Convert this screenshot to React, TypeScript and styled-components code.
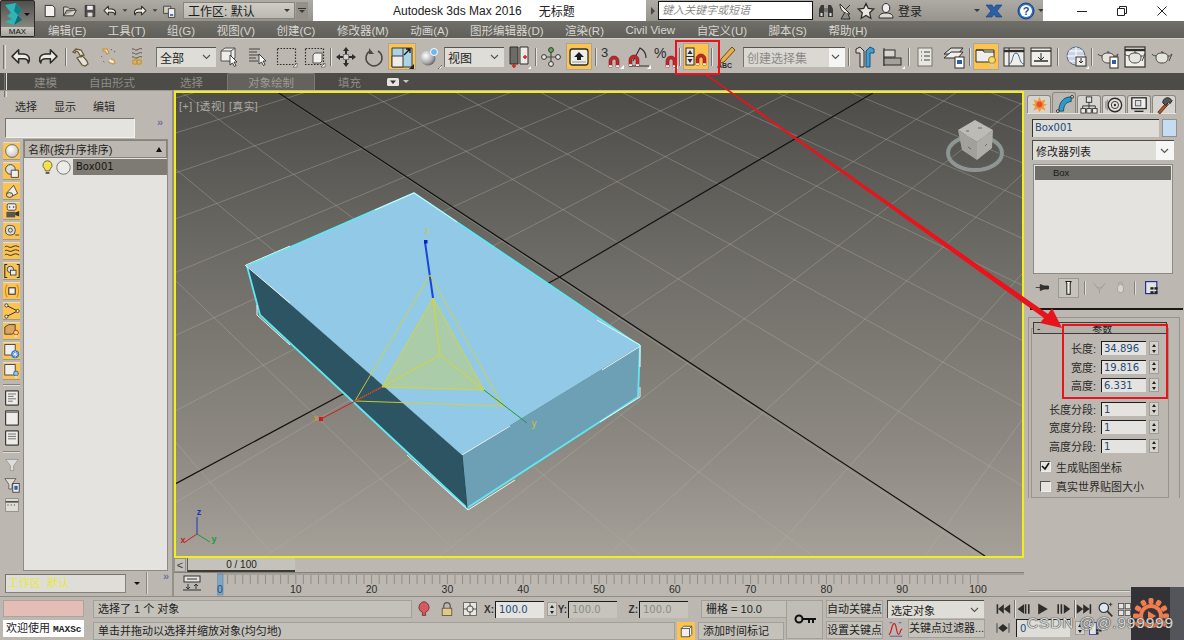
import React from "react";
import styled, { createGlobalStyle } from "styled-components";

const Global = createGlobalStyle`
  html, body { margin: 0; padding: 0; background: #bcb8b1; }
  #root { width: 1184px; height: 640px; overflow: hidden; }
  * { box-sizing: border-box; }
`;

const FONT = `"Liberation Sans", "Noto Sans CJK SC", sans-serif`;
const PANEL = "#bcb8b1";

const Root = styled.div`
  position: relative; width: 1184px; height: 640px; overflow: hidden;
  display: flex; flex-direction: column; background: ${PANEL};
  font-family: ${FONT}; font-size: 11px; color: #2b2a28;
`;

/* ---------- icons ---------- */
const Svg: React.FC<{ s?: number; vb?: number; children: React.ReactNode }> = ({ s = 20, vb, children }) => {
  const box = vb ?? (s >= 22 ? s : 20);
  return <svg width={s} height={s} viewBox={`0 0 ${box} ${box}`} style={{ display: "block", flex: "none" }} fill="none">{children}</svg>;
};
const K = "#2e2d2b";
const Magnet = ({ x = 0, y = 0 }: { x?: number; y?: number }) => (
  <g transform={`translate(${x} ${y})`}>
    <path d="M0 11V5a5 5 0 0 1 10 0v6H7V5a2 2 0 0 0-4 0v6z" fill="#c8242a" stroke="#5c1214" strokeWidth=".5" />
    <path d="M0 11h3v-1.800H0zM7 11h3V9.200H7z" fill="#f0f0ee" />
  </g>
);
const NewIco = () => <Svg><path d="M4 3h9l3 3v11H4z" fill="#f3f2ee" stroke={K} strokeWidth="1.200" /></Svg>;
const OpenIco = () => <Svg><path d="M2 16V5h5l2 2h7v2H6l-4 7h12l4-7h-2" fill="#d9d6cf" stroke={K} strokeWidth="1.100" /></Svg>;
const SaveIco = () => <Svg><path d="M4 3h12v14H4z" fill="#4b4b4b" stroke={K} /><path d="M6.500 3.500h7v5h-7z" fill="#eee" /><path d="M7 12h6v5H7z" fill="#dedcd6" /></Svg>;
const ArrowL = ({ s = 20 }: { s?: number }) => <Svg s={s} vb={20}><path d="M8 4 2.500 9.500 8 15v-3.500h4c2.500 0 4 1 4 3.500 1.500-2 2-7-4-7.500H8z" fill="#ecebe6" stroke={K} strokeWidth="1.300" strokeLinejoin="round" /></Svg>;
const ArrowR = ({ s = 20 }: { s?: number }) => <Svg s={s} vb={20}><path d="M12 4l5.500 5.500L12 15v-3.500H8c-2.500 0-4 1-4 3.500-1.500-2-2-7 4-7.500h4z" fill="#ecebe6" stroke={K} strokeWidth="1.300" strokeLinejoin="round" /></Svg>;
const ProjIco = () => <Svg><path d="M2 4h9v9H2z" fill="#cfccc5" stroke={K} /><path d="M8 7h8v11H8z" fill="#f1f0ec" stroke={K} /><path d="M10 14h4v2h-4z" fill="#2a5ea8" /></Svg>;
const Caret = styled.i<{ $c?: string }>`
  display: block; flex: none; width: 0; height: 0;
  border-left: 3px solid transparent; border-right: 3px solid transparent;
  border-top: 3px solid ${p => p.$c || "#3a3a38"};
`;
const Binoc = () => <Svg><path d="M3 16V8l2-4h3v12zM12 16V4h3l2 4v8z" fill="#3a3a38" /><path d="M8 7h4v4H8z" fill="#777" /><path d="M4.500 12h2v3h-2zM13.500 12h2v3h-2z" fill="#ddd" /></Svg>;
const Dish = () => <Svg><path d="M4 3c0 6 4 10 10 10z" fill="#e6e5e0" stroke={K} /><path d="M9 11l-4 7h9l-2-5" fill="#8d8b86" stroke={K} /><path d="M10 8l4-4" stroke={K} /></Svg>;
const Star = () => <Svg><path d="M10 2.500l2.300 5 5.400.6-4 3.700 1.100 5.400L10 14.500l-4.800 2.700 1.100-5.400-4-3.700 5.400-.6z" fill="#e8e7e2" stroke={K} strokeWidth="1.300" /></Svg>;
const User = () => <Svg><ellipse cx="10" cy="7" rx="3.800" ry="4.500" fill="#eee" stroke={K} /><path d="M3 17c0-4 3-5 7-5s7 1 7 5z" fill="#dcdad4" stroke={K} /></Svg>;
const XLogo = () => <Svg><path d="M2 4h6l2 3 2-3h6l-5 6 5 6h-6l-2-3-2 3H2l5-6z" fill="#2a5fa8" stroke="#173a70" strokeWidth=".6" /></Svg>;
const Help = () => <Svg><circle cx="10" cy="10" r="8" fill="#2f6fc4" stroke="#1c3f7a" /><circle cx="10" cy="10" r="6" fill="#fff" /><text x="10" y="14" textAnchor="middle" fontSize="11" fontWeight="700" fill="#1f4f9a" fontFamily="Liberation Sans">?</text></Svg>;
const Link = () => <Svg s={22}><path d="M3 6l3-3 5 1 3 5-3 2-3-5-2-1-1 2zM9 11l3-2 5 6 1 3-3 2-3-1-5-7z" fill="#e4e2dc" stroke="#6b5a35" strokeWidth="1.300" /></Svg>;
const Unlink = () => <Svg s={22}><path d="M5 3h4l2 4-2 1-2-3H5zM13 13l3 1 1 3-2 1-3-1-2-2" fill="#eee" stroke="#c89a46" strokeWidth="1.400" /><path d="M3 10l2 2m0 3 2 2" stroke="#555" strokeDasharray="1 1.500" /><path d="M13 3l1 2m3 0-1 2" stroke="#555" strokeDasharray="1 1" /></Svg>;
const Bind = () => <Svg s={22}><path d="M3 3c2-1 3 2 5 1s3-2 5-1M3 7c2-1 3 2 5 1s3-2 5-1M3 11c2-1 3 2 5 1s3-2 5-1" stroke="#55534e" transform="translate(3 0)" /><circle cx="9" cy="16" r="2.300" stroke="#d39a22" strokeWidth="1.500" /><circle cx="13" cy="16" r="2.300" stroke="#d39a22" strokeWidth="1.500" /></Svg>;
const Cursor = ({ x = 10, y = 9 }: { x?: number; y?: number }) => <path transform={`translate(${x} ${y})`} d="M0 0v10l2.500-2 2 3.500 1.500-1-2-3.500h3z" fill="#fff" stroke={K} strokeWidth=".9" />;
const SelObj = () => <Svg s={22}><path d="M2 5l4-3h10v10l-4 3H2z" fill="#eeedea" stroke="#55534e" /><path d="M2 5h10v10M12 5l4-3" stroke="#55534e" /><Cursor x={11} y={9} /></Svg>;
const SelName = () => <Svg s={22}><path d="M2 3h11M2 6h8M2 9h11M2 12h7M2 15h9" stroke="#45443f" strokeWidth="1.200" /><Cursor x={12} y={8} /></Svg>;
const RectSel = () => <Svg s={22}><path d="M1.500 2.500h18v16h-18z" stroke={K} strokeWidth="1.200" strokeDasharray="1.600 1.400" /><path d="M17 21h4v-4z" fill="#fff" stroke={K} strokeWidth=".5" /></Svg>;
const WinSel = () => <Svg s={22}><path d="M1.500 2.500h18v16h-18z" stroke={K} strokeWidth="1.200" strokeDasharray="1.600 1.400" /><path d="M9 9l2-2h7v8l-2 2H9z" fill="#f1f0ec" stroke="#55534e" /><path d="M17 21h4v-4z" fill="#fff" stroke={K} strokeWidth=".5" /></Svg>;
const Move = () => <Svg s={22}><path d="M11 1l3 4h-2v3h-2V5H8zM11 21l-3-4h2v-3h2v3h2zM1 11l4-3v2h3v2H5v2zM21 11l-4 3v-2h-3v-2h3V8z" fill={K} /><rect x="8.500" y="8.500" width="5" height="5" stroke="#777" fill="#d7d5cf" /></Svg>;
const Rotate = () => <Svg s={22}><path d="M7 5a8 8 0 1 0 8 0" stroke="#4a4944" strokeWidth="1.500" /><path d="M6 2v6h5z" fill="#4a4944" /></Svg>;
const Scale = () => <Svg s={24}><path d="M2 3h20v19H2z" fill="#a9d4e4" stroke="#3d3c38" /><path d="M2 11h11v11H2z" fill="#eeece7" stroke="#3d3c38" /><path d="M13 3v8" stroke="#3d3c38" /><path d="M14 10l6-6m-4 0h4v4" stroke="#111" strokeWidth="1.300" /><path d="M19 24h5v-5z" fill="#222" /></Svg>;
const Sphere = () => <Svg s={24}><defs><radialGradient id="sp" cx=".35" cy=".35" r=".8"><stop offset="0" stopColor="#fff" /><stop offset=".6" stopColor="#aaa" /><stop offset="1" stopColor="#444" /></radialGradient></defs><circle cx="10" cy="13" r="7.500" fill="url(#sp)" /><circle cx="16" cy="7" r="3.500" fill="#69b8ee" stroke="#fff" /><path d="M20 24h4v-4z" fill="#fff" stroke={K} strokeWidth=".5" /></Svg>;
const Mirror2 = () => <Svg s={24}><path d="M3 2h8v17H3z" fill="#6c6b66" stroke={K} /><path d="M13 2h8v17h-8z" fill="#eceae5" stroke={K} /><path d="M7 19v4M5 21h4M18 10v4M16 12h4" stroke="#e01820" strokeWidth="1.400" /><path d="M21 24h3v-3z" fill="#fff" /></Svg>;
const Pivot = () => <Svg s={22}><path d="M11 5v13M4 11h14" stroke="#4a4944" strokeWidth="1.200" /><circle cx="11" cy="4" r="2.400" fill="#5cb04c" stroke="#333" /><circle cx="4" cy="11" r="2.400" fill="#e9e7e2" stroke="#333" /><circle cx="18" cy="11" r="2.400" fill="#e9e7e2" stroke="#333" /><circle cx="11" cy="18" r="2.400" fill="#e9e7e2" stroke="#333" /></Svg>;
const Manip = () => <Svg s={22}><rect x="2" y="3" width="18" height="16" rx="2.500" fill="#efeee9" stroke={K} strokeWidth="1.300" /><path d="M11 6l5 5h-3v3H9v-3H6z" fill="#1c1c1c" /><path d="M4 16h14" stroke="#999" /></Svg>;
const Snap3 = () => <Svg s={24}><text x="1" y="12" fontSize="13" fill={K} fontFamily="Liberation Sans">3</text><Magnet x={9} y={11} /><path d="M20 24h4v-4z" fill="#fff" /></Svg>;
const SnapA = () => <Svg s={24}><path d="M6 16L13 3c4 2 6 6 6 10M2 21h20" stroke={K} strokeWidth="1.100" /><Magnet x={2} y={10} /><path d="M20 24h4v-4z" fill="#fff" /></Svg>;
const SnapP = () => <Svg s={24}><text x="0" y="13" fontSize="14" fill={K} fontFamily="Liberation Sans">%</text><Magnet x={12} y={11} /><path d="M20 24h4v-4z" fill="#fff" /></Svg>;
const SnapS = () => <Svg s={24}><rect x="2" y="3" width="8" height="17" fill="#e9e7e2" stroke={K} /><path d="M6 5l-2.500 4h5zM6 18l2.500-4h-5z" fill={K} /><path d="M2 11.500h8" stroke={K} /><Magnet x={12} y={9} /></Svg>;
const Pencil = () => <Svg s={24}><path d="M6 14L17 2l3 3L9 17l-4 1z" fill="#e9b04a" stroke="#6b4a18" /><text x="2" y="23" fontSize="7" fontWeight="700" fill={K} fontFamily="Liberation Sans">ABC</text></Svg>;
const MirrorBig = () => <Svg s={24}><path d="M3 4l4-2 4 4v16H7V8H3z" fill="#dad8d2" stroke={K} /><path d="M21 4l-4-2-4 4v16h4V8h4z" fill="#3f9fd2" stroke="#1c5070" /></Svg>;
const Align = () => <Svg s={24}><path d="M3 3v18" stroke={K} /><rect x="3" y="5" width="11" height="7" fill="#d7d5cf" stroke={K} /><rect x="3" y="13" width="17" height="7" fill="#a3a19b" stroke={K} /><path d="M21 24h3v-3z" fill="#fff" /></Svg>;
const ListI = () => <Svg s={22}><rect x="4" y="2" width="14" height="18" fill="#e8e6e1" stroke="#77756f" /><path d="M7 6h1M10 6h6M7 10h1M10 10h6M7 14h1M10 14h6" stroke="#45443f" /></Svg>;
const LayerI = () => <Svg s={24}><path d="M2 9l7-6h12l-5 6z" fill="#e3e1dc" stroke={K} /><path d="M2 13l7-6h12l-5 6z" fill="#f2f0ec" stroke={K} /><rect x="13" y="12" width="9" height="11" fill="#fff" stroke={K} /><path d="M15 15h5v4h-5z" fill="#2a5ea8" /></Svg>;
const Folder = () => <Svg s={24}><path d="M2 5h18v12H2z" fill="#efeee9" stroke={K} /><path d="M2 5h7l1 2h10" stroke={K} /><circle cx="18" cy="15" r="3.500" fill="#f6d86c" stroke="#9a7c22" /><rect x="16.500" y="18.500" width="3" height="3" fill="#ccc" /></Svg>;
const Graph = () => <Svg s={24}><rect x="2" y="3" width="20" height="18" fill="#efeee9" stroke={K} /><path d="M2 6h20" stroke={K} strokeWidth="2.400" /><path d="M7 3v18" stroke={K} /><path d="M7 19c4 0 3-11 7-11s3 11 8 11" stroke="#35639a" /></Svg>;
const Sched = () => <Svg s={24}><rect x="2" y="3" width="20" height="18" fill="#efeee9" stroke={K} /><path d="M2 6h20M5 16h14" stroke={K} strokeWidth="1.500" /><path d="M12 8v6m-3-2l3 3 3-3" stroke={K} /></Svg>;
const Globe = () => <Svg s={24}><circle cx="11" cy="11" r="9" fill="#c9d4e2" stroke="#5a6a80" /><path d="M2 11h18M11 2v18M4 6h14M4 16h14" stroke="#fff" /><rect x="11" y="12" width="10" height="9" fill="#efeee9" stroke={K} /><path d="M16 13v5m-2-2l2 2 2-2" stroke={K} /><path d="M21 24h3v-3z" fill="#fff" /></Svg>;
const Teapot = ({ box = 0 }: { box?: number }) => <Svg s={24}>{box === 2 && <rect x="2" y="2" width="20" height="20" fill="#efeee9" stroke={K} strokeWidth="1.200" />}{box === 2 && <path d="M2 5h20" stroke={K} strokeWidth="2.400" />}<path d="M6 12c0-3 3-4 6-4s6 1 6 4c0 4-2 6-6 6s-6-2-6-6z" fill="#e6e4df" stroke="#45443f" /><path d="M6 11c-2-1-3 0-4-2M18 11c2 1 3-2 4-2l-3 7" stroke="#45443f" /><path d="M11 7h2v1" stroke="#45443f" />{box === 1 && <><rect x="14" y="12" width="8" height="11" fill="#fff" stroke={K} /><rect x="16" y="15" width="4" height="4" fill="#2a5ea8" /></>}</Svg>;

/* left panel creation icons */
const T = ({ children }: { children: React.ReactNode }) => <Svg s={16}>{children}</Svg>;
const Ball = () => <><defs><radialGradient id="bl" cx=".4" cy=".35" r=".7"><stop offset="0" stopColor="#fff" /><stop offset="1" stopColor="#c3c3c0" /></radialGradient></defs><circle cx="10" cy="10" r="8" fill="url(#bl)" stroke="#55534e" /></>;
const leftIcons = [
  <T key="a"><Ball /></T>,
  <T key="b"><circle cx="8" cy="8" r="6" fill="#ddd" stroke={K} /><path d="M9 9h9v9H9z" fill="#eee" stroke={K} /></T>,
  <T key="c"><path d="M3 13L12 3l5 10-6 3z" fill="#eee" stroke={K} /><ellipse cx="7" cy="15" rx="4" ry="3" fill="#e8d89a" stroke={K} /></T>,
  <T key="d"><rect x="4" y="1" width="11" height="8" rx="2" fill="#eee" stroke={K} /><rect x="3" y="11" width="11" height="7" fill="#555" /><path d="M14 12l5-2v7l-5-2z" fill="#333" /><circle cx="7" cy="5" r="1" fill={K} /><circle cx="12" cy="5" r="1" fill={K} /></T>,
  <T key="e"><rect x="2" y="3" width="12" height="12" rx="5" fill="#dedcd6" stroke={K} /><circle cx="8" cy="9" r="2.500" stroke={K} /><path d="M14 15h5" stroke={K} /></T>,
  <T key="f"><path d="M1 5c3-3 5 2 9 0s5-2 9 0M1 10c3-3 5 2 9 0s5-2 9 0M1 15c3-3 5 2 9 0s5-2 9 0" stroke={K} strokeWidth="1.200" /></T>,
  <T key="g"><path d="M4 2H1v16h3M16 2h3v16h-3" stroke={K} strokeWidth="1.300" /><circle cx="8" cy="8" r="4" fill="#ddd" stroke={K} /><rect x="8" y="9" width="7" height="6" fill="#eee" stroke={K} /></T>,
  <T key="h"><path d="M4 2C1 6 1 14 4 18M16 2c3 4 3 12 0 16" stroke="#e08a1e" strokeWidth="1.500" /><rect x="6" y="6" width="8" height="8" fill="#f2f1ed" stroke={K} strokeWidth="1.300" /></T>,
  <T key="i"><path d="M3 3l14 7L3 17" stroke={K} strokeWidth="1.200" /><circle cx="3" cy="3" r="2" fill="#eee" stroke={K} /><circle cx="17" cy="10" r="2" fill="#eee" stroke={K} /><circle cx="3" cy="17" r="2" fill="#eee" stroke={K} /></T>,
  <T key="j"><path d="M1 5l5-3h8v9l-4 3H1z" fill="#d9a662" stroke={K} /><circle cx="15" cy="12" r="3" fill="#f6d56a" stroke="#a23" /><rect x="13.500" y="15" width="3" height="3" fill="#ddd" /></T>,
  <T key="k"><rect x="1" y="2" width="13" height="13" fill="#eee" stroke={K} /><circle cx="14" cy="14" r="5" fill="#2f78d8" /><path d="M14 10v8M10.500 14h7M11.500 11.500l5 5M16.500 11.500l-5 5" stroke="#fff" /></T>,
  <T key="l"><rect x="1" y="2" width="13" height="13" fill="#eee" stroke={K} /><circle cx="15" cy="13" r="3" fill="#8ec3e8" stroke="#357" /><rect x="13.500" y="16" width="3" height="3" fill="#ddd" /></T>,
];
const Doc = ({ lines = 3 }: { lines?: number }) => <T><rect x="2" y="1" width="16" height="18" rx="1" fill="#eeede9" stroke="#3d3c38" strokeWidth="1.500" /><path d={lines === 1 ? "M3 3h14" : lines === 2 ? "M5 5h10M5 8h10M5 11h10" : "M5 5h10M5 8h7M5 11h10M5 14h6"} stroke="#555" /></T>;
const Funnel = () => <T><path d="M2 3h16l-6 8v6h-4v-6z" fill="#ddd" stroke="#96938c" /></T>;
const FunnelDoc = () => <T><path d="M1 2h14l-5 7v6H6V9z" fill="#dedcd6" stroke="#55534e" /><rect x="11" y="8" width="8" height="11" fill="#eee" stroke={K} /><path d="M13 11h4v5h-4z" fill="#2a5ea8" /></T>;
const Strip = () => <T><rect x="2" y="2" width="16" height="16" fill="#dedcd6" stroke="#8a8780" /><path d="M2 6h16" stroke="#4d4c47" strokeWidth="2" /><path d="M5 9v2M9 9v2M13 9v2" stroke="#555" /></T>;

/* ---------- title bar ---------- */
const LogoBtn = styled.div`
  position: absolute; left: 0; top: 0; width: 35px; height: 37px; z-index: 3;
  background: linear-gradient(#4f4e4a, #9b9992); border: 1px solid #2b2a28; border-radius: 2px;
  display: flex; flex-direction: column; align-items: center;
`;
const LogoArt = styled.div`flex: 1; width: 100%; display: flex; align-items: center; justify-content: center; padding-right: 3px;`;
const LogoLabel = styled.div`
  width: 100%; height: 9px; background: linear-gradient(#c9c6bf, #a8a59e); text-align: center;
  font-size: 8px; line-height: 9px; color: #111;
`;
const TitleBar = styled.div`height: 21px; display: flex; background: #fff; flex: none;`;
const QuickBar = styled.div`
  width: 313px; padding-left: 40px; display: flex; align-items: center;
  background: linear-gradient(#aeaba4, #96938c);
`;
const QuickBtn = styled.div<{ $w?: number }>`width: ${p => p.$w ?? 20}px; display: flex; align-items: center; justify-content: center; transform: scale(.8);`;
const WorkCombo = styled.div`
  margin-left: 3px; width: 112px; height: 17px; padding: 0 4px; display: flex; align-items: center; justify-content: space-between;
  background: linear-gradient(#cfccc5, #bcb9b2); border: 1px solid #88857e; font-size: 12px; color: #1d1d1d;
`;
const MenuKnob = styled.div`margin-left: 1px; width: 12px; height: 17px; background: #94918a; display: flex; flex-direction: column; align-items: center; justify-content: center; gap: 1px; &::before { content: ""; width: 8px; height: 1px; background: #333; }`;
const TitleText = styled.div`
  width: 333px; padding-left: 80px; display: flex; align-items: center; gap: 17px; font-size: 12px; color: #222; white-space: nowrap;
`;
const SearchBar = styled.div`
  width: 397px; padding-left: 5px; display: flex; align-items: center;
  background: linear-gradient(#aeaba4, #97948d);
`;
const Tri = styled.i`width: 0; height: 0; border-top: 4px solid transparent; border-bottom: 4px solid transparent; border-left: 4px solid #4a4944; flex: none;`;
const SearchInput = styled.div`
  margin-left: 3px; width: 155px; height: 19px; padding-left: 3px; background: #fff; border: 1px solid #111; flex: none;
  font-size: 11px; line-height: 17px; font-style: italic; color: #8a8a88;
`;
const SearchIcons = styled.div`
  margin-left: 3px; flex: 1; display: flex; align-items: center; white-space: nowrap;
`;
const SearchIcon = styled.div<{ $ml?: number }>`margin-left: ${p => p.$ml ?? 0}px; flex: none; display: flex; align-items: center; font-size: 12px; color: #222;`;
const WinCtrls = styled.div`flex: 1; display: flex; align-items: center; background: #fff; padding-left: 19px;`;
const WinBtn = styled.div`width: 40px; display: flex; align-items: center; justify-content: center;`;

/* ---------- menu ---------- */
const MenuBar = styled.div`
  height: 17px; flex: none; padding-left: 48px; display: flex; align-items: center; gap: 21.500px;
  background: linear-gradient(#716f6a, #5f5e59); color: #d8d6d0; font-size: 11.500px; white-space: nowrap;
`;
/* ---------- toolbar ---------- */
const ToolBar = styled.div`
  height: 35px; flex: none; padding: 1px 0 0 3px; display: flex; align-items: center;
  background: ${PANEL}; border-top: 1px solid #d2cfc8;
`;
const Grip = styled.div`width: 3px; height: 24px; flex: none; border-left: 1px solid #77746d; border-right: 1px solid #e2e0da;`;
const Slot = styled.div<{ $w: number; $ml: number; $hl?: boolean }>`
  flex: none; width: ${p => p.$w}px; height: 27px; margin-left: ${p => p.$ml}px;
  display: flex; align-items: center; justify-content: center;
  background: ${p => (p.$hl ? "#fcc44e" : "transparent")};
  ${p => p.$hl && "box-shadow: inset 0 0 0 1px #a9a59d;"}
`;
const ToolSep = styled.div<{ $ml: number }>`
  flex: none; width: 2px; height: 18px; margin-left: ${p => p.$ml}px;
  border-left: 1px solid #77746d; border-right: 1px solid #e6e4de;
`;
const ToolCombo = styled.div<{ $w: number; $ml: number; $grey?: boolean }>`
  flex: none; width: ${p => p.$w}px; height: 20px; margin-left: ${p => p.$ml}px; padding: 0 5px 0 3px;
  display: flex; align-items: center; justify-content: space-between;
  background: ${p => (p.$grey ? "linear-gradient(90deg,#d9d8d3 84%,#f5f5f3 84%)" : "#dfddd8")};
  border-top: 1px solid #55534e; border-left: 1px solid #77746d;
  font-size: 12px; color: ${p => (p.$grey ? "#8b8a86" : "#1d1d1d")};
`;
const Chev = () => <svg width="9" height="6" viewBox="0 0 9 6" style={{ flex: "none" }}><path d="M1 1l3.500 3.500L8 1" stroke="#55534e" fill="none" strokeWidth="1.100" /></svg>;

/* ---------- ribbon ---------- */
const Ribbon = styled.div`
  height: 17px; flex: none; padding-left: 4px; display: flex; align-items: stretch;
  background: #4c4b47; color: #8e8c86; font-size: 11.500px; white-space: nowrap;
`;
const RibbonTab = styled.div<{ $ml: number; $active?: boolean }>`
  margin-left: ${p => p.$ml}px; display: flex; align-items: center;
  ${p => p.$active && `background: #63625d; border: 1px solid #7b7973; border-bottom: 0; border-radius: 2px 2px 0 0; padding: 0 20px; color: #9c9a94;`}
`;

/* ---------- main ---------- */
const Main = styled.div`flex: 1; min-height: 0; display: flex;`;
const LeftPanel = styled.div`
  width: 174px; flex: none; display: flex; flex-direction: column; padding-right: 4px;
  border-right: 2px solid #94918a; border-top: 1px solid #9d9a93;
`;
const PanelTabs = styled.div`height: 27px; flex: none; padding: 3px 0 0 15px; display: flex; gap: 17px; font-size: 11px; align-items: center; color: #2b2a28;`;
const FindRow = styled.div`height: 21px; flex: none; padding-left: 5px; display: flex; align-items: flex-start;`;
const FindBox = styled.div`width: 130px; height: 20px; background: #e4e3df; border-top: 1px solid #77746d; border-left: 1px solid #77746d; border-right: 1px solid #f2f1ed; border-bottom: 1px solid #f2f1ed;`;
const Chevrons = styled.div<{ $ml: number }>`margin-left: ${p => p.$ml}px; color: #6f72a8; font-size: 11px; line-height: 9px; font-weight: 700; letter-spacing: -1px;`;
const PanelBody = styled.div`flex: 1; min-height: 0; display: flex; padding-left: 3px; gap: 3px;`;
const ToolCol = styled.div`width: 17px; flex: none; padding-top: 3px; display: flex; flex-direction: column; align-items: center;`;
const ToolTile = styled.div<{ $y?: boolean }>`
  width: 17px; height: 18px; margin-bottom: 2px; flex: none; display: flex; align-items: center; justify-content: center;
  background: ${p => (p.$y ? "#fcc44e" : "transparent")};
  ${p => p.$y && "box-shadow: inset 0 -1px 0 #999, inset 0 1px 0 #ddd;"}
`;
const ToolDiv = styled.div`width: 17px; height: 2px; margin: 2px 0 3px; border-top: 1px solid #87847d; border-bottom: 1px solid #dedcd6; flex: none;`;
const ObjectList = styled.div`flex: 1; min-width: 0; background: #e4e3df; border: 1px solid #8d8a83; display: flex; flex-direction: column;`;
const ListHead = styled.div`
  height: 18px; flex: none; padding: 0 4px 0 3px; display: flex; align-items: center; justify-content: space-between;
  background: #bcb8b1; border: 1px solid #85827b; font-size: 11px; color: #1d1d1d;
`;
const SortTri = styled.i`width: 0; height: 0; border-left: 3.500px solid transparent; border-right: 3.500px solid transparent; border-bottom: 5px solid #111;`;
const ListRow = styled.div`height: 16px; flex: none; padding-left: 16px; display: flex; align-items: center; gap: 1px; margin-top: 1px;`;
const ListName = styled.div`flex: 1; height: 16px; margin-left: 1px; padding-left: 3px; background: #7e7b75; line-height: 16px; color: #16160f; font-family: "DejaVu Sans", sans-serif; font-size: 10px;`;
const PanelFoot = styled.div`height: 24px; flex: none; margin-top: 1px; padding-left: 5px; display: flex; align-items: flex-start;`;
const FootCombo = styled.div`
  width: 125px; height: 19px; margin-top: 2px; padding-left: 2px; background: #dfddd8;
  border-top: 1px solid #77746d; border-left: 1px solid #77746d; border-right: 1px solid #85827b; border-bottom: 1px solid #85827b;
  color: #e8e83a; font-size: 11px; line-height: 17px;
`;
const FootCaret = styled.div`width: 14px; margin-top: 10px; display: flex; justify-content: flex-end;`;
const FootSep = styled.div`width: 2px; height: 22px; margin-left: 6px; border-left: 1px solid #8a8780; border-right: 1px solid #dedcd6;`;

const Center = styled.div`width: 850px; flex: none; display: flex; flex-direction: column;`;
const Viewport = styled.div`
  position: relative; height: 467px; flex: none; border: 2px solid #f2ee1c; margin-top: 1px; overflow: hidden;
  background: linear-gradient(#4d4c48 0%, #6d6b66 35%, #8c8881 75%, #a5a098 100%);
`;
const ViewLabel = styled.div`position: absolute; left: 3px; top: 5px; color: #aeaca6; font-size: 10.500px; letter-spacing: .6px; white-space: nowrap;`;
const Timeline = styled.div`flex: 1; display: flex; flex-direction: column;`;
const ScrollRow = styled.div`height: 15px; flex: none; display: flex; align-items: center; border-bottom: 1px solid #85827b;`;
const ScrollBtn = styled.div`width: 12px; height: 14px; text-align: center; line-height: 13px; font-size: 11px; color: #3c3b38; background: #c4c1ba; border: 1px solid #96938c;`;
const ScrollThumb = styled.div`
  width: 108px; height: 14px; margin-left: 1px; text-align: center; line-height: 13px; font-size: 10px; color: #222;
  background: #c5c2bb; border-bottom: 2px solid #3b3a37; border-left: 1px solid #5f5e59;
`;
const RulerRow = styled.div`flex: 1; display: flex; align-items: flex-start;`;
const KeyMode = styled.div`width: 43px; padding: 2px 0 0 9px; flex: none;`;

const RightPanel = styled.div`
  flex: 1; min-width: 0; display: flex; flex-direction: column; padding: 3px 0 0 3px;
`;
const TabRow = styled.div`height: 21px; flex: none; display: flex; gap: 1px; align-items: flex-end; border-bottom: 1px solid #e4e2dc; margin-right: 8px;`;
const CmdTab = styled.div<{ $active?: boolean }>`
  width: 24px; height: ${p => (p.$active ? 21 : 18)}px; display: flex; align-items: center; justify-content: center;
  background: ${p => (p.$active ? "#bcb8b1" : "#d6d4ce")}; border: 1px solid #8a8780; border-bottom: 0; border-radius: 3px 3px 0 0;
`;
const NameRow = styled.div`height: 18px; margin: 5px 0 0 5px; flex: none; display: flex; gap: 3px;`;
const NameInput = styled.div`width: 127px; padding-left: 2px; background: #dfddd8; border-top: 1px solid #34332f; border-left: 1px solid #34332f; color: #234b78; font-size: 10px; line-height: 16px; font-family: "DejaVu Sans", sans-serif;`;
const Swatch = styled.div`width: 15px; background: #c6dcf2; border: 1px solid #8f9091;`;
const ModCombo = styled.div`
  width: 142px; height: 20px; margin: 3px 0 0 5px; flex: none; display: flex; align-items: center; justify-content: space-between;
  background: linear-gradient(90deg,#dfddd8 87%,#f6f6f4 87%); border-top: 1px solid #4d4c47; border-left: 1px solid #4d4c47;
  padding: 0 5px 0 3px; font-size: 11px; color: #222;
`;
const Stack = styled.div`width: 140px; height: 110px; margin: 4px 0 0 6px; flex: none; background: #e4e3df; border: 1px solid #8d8a83; padding: 1px;`;
const StackItem = styled.div`height: 14px; background: #6e6d68; padding-left: 18px; font-size: 9.500px; line-height: 14px; color: #1a1a18;`;
const StackTools = styled.div`height: 21px; margin: 3px 0 0 5px; flex: none; display: flex; align-items: center;`;
const StackBtn = styled.div<{ $ml: number; $on?: boolean }>`
  margin-left: ${p => p.$ml}px; width: 21px; height: 20px; display: flex; align-items: center; justify-content: center;
  ${p => p.$on && "border: 1px solid #9c9992; background: #c6c3bc;"}
`;
const StackSep = styled.div<{ $ml: number }>`margin-left: ${p => p.$ml}px; width: 2px; height: 14px; border-left: 1px solid #87847d; border-right: 1px solid #dedcd6;`;
const HeavyLine = styled.div`height: 2px; margin: 10px 1px 0 3px; flex: none; background: #191917;`;
const Rollout = styled.div`margin: 7px 4px 0 1px; height: 181px; flex: none; border: 1px solid #96938c; border-bottom: 0; padding: 4px 0 0 4px;`;
const RollHead = styled.div`
  width: 134px; height: 12px; display: flex; align-items: center; padding-left: 3px; flex: none;
  background: #b4b0a9; border: 1px solid #3d3c38; font-size: 10px; color: #1e1e1c; position: relative; z-index: 1;
`;
const RollTitle = styled.span`flex: 1; text-align: center; padding-right: 2px;`;
const RollBody = styled.div`
  margin-top: -6px; width: 138px; height: 170px; padding-top: 10px; border: 1px solid #96938c; margin-left: -2px;
`;
const FieldGroup = styled.div<{ $mb: number }>`margin-bottom: ${p => p.$mb}px;`;
const FieldRow = styled.div`height: 18.500px; display: flex; align-items: center;`;
const FieldLabel = styled.div`width: 64px; text-align: right; font-size: 11px; color: #2b2a28; white-space: nowrap;`;
const FieldInput = styled.div`
  margin-left: 5px; width: 45px; height: 14px; background: #e4e3df; border-top: 1px solid #1c1c1a; border-left: 1px solid #1c1c1a;
  padding-left: 2px; color: #234b78; font-size: 10px; line-height: 13px; font-family: "DejaVu Sans", sans-serif;
`;
const Spinner = styled.div`
  margin-left: 3px; width: 10px; height: 14px; background: #d4d2cc; border: 1px solid #a09d96; flex: none;
  display: flex; flex-direction: column; align-items: center; justify-content: space-around;
`;
const SpinUp = styled.i`width: 0; height: 0; border-left: 2.500px solid transparent; border-right: 2.500px solid transparent; border-bottom: 3px solid #222;`;
const SpinDown = styled.i`width: 0; height: 0; border-left: 2.500px solid transparent; border-right: 2.500px solid transparent; border-top: 3px solid #222;`;
const CheckRow = styled.div`height: 19.500px; padding-left: 8px; display: flex; align-items: center; gap: 5px; font-size: 11px; white-space: nowrap;`;
const CheckBox = styled.div`width: 11px; height: 11px; background: #e4e3df; border-top: 1px solid #55534e; border-left: 1px solid #55534e; border-right: 1px solid #f0efeb; border-bottom: 1px solid #f0efeb; display: flex; align-items: center; justify-content: center;`;
const GrooveLine = styled.div`height: 2px; margin: auto 54px 4px 2px; flex: none; border-top: 1px solid #8f8c85; border-bottom: 1px solid #dedcd6;`;

/* ---------- status ---------- */
const Status = styled.div`height: 44px; flex: none; display: flex; padding: 3px 0 0 3px; border-top: 1px solid #8f8c85;`;
const LeftCol = styled.div`width: 81px; flex: none; display: flex; flex-direction: column; gap: 3px;`;
const Pink = styled.div`height: 17px; background: #e3bdb6; border: 1px solid #a8a59e;`;
const Welcome = styled.div`height: 17px; background: #fff; padding-left: 3px; font-size: 11px; line-height: 16px; color: #222; white-space: nowrap; overflow: hidden;`;
const MonoSpan = styled.span`font-family: "Liberation Mono", monospace; font-size: 9.500px; font-weight: 700;`;
const MidCol = styled.div`width: 690px; margin-left: 9px; flex: none; display: flex; flex-direction: column; gap: 4px;`;
const MidRow = styled.div`height: 18px; flex: none; display: flex; align-items: center;`;
const StatusBox = styled.div<{ $w: number; $ml?: number }>`
  width: ${p => p.$w}px; margin-left: ${p => p.$ml ?? 0}px; height: 18px; flex: none; padding-left: 4px;
  background: #c4c1ba; border: 1px solid #a3a099; font-size: 11px; line-height: 16px; color: #222; white-space: nowrap; overflow: hidden;
`;
const MiniIcon = styled.div<{ $ml: number }>`margin-left: ${p => p.$ml}px; flex: none; display: flex;`;
const AxisLabel = styled.div<{ $w: number }>`width: ${p => p.$w}px; flex: none; text-align: right; font-size: 10px; font-weight: 700; color: #333;`;
const CoordInput = styled.div<{ $off?: boolean }>`
  margin-left: 1px; width: 49px; height: 17px; flex: none; padding-left: 3px;
  background: ${p => (p.$off ? "#c7c4bd" : "#e4e3df")}; border-top: 1px solid #1c1c1a; border-left: 1px solid #1c1c1a;
  color: ${p => (p.$off ? "#8c8a85" : "#234b78")}; font-size: 10px; line-height: 16px; font-family: "DejaVu Sans", sans-serif;
`;
const YellowTile = styled.div`margin-left: 2px; width: 18px; height: 18px; flex: none; background: #fcc44e; display: flex; align-items: center; justify-content: center;`;
const KeyBtn = styled.div`width: 37px; height: 39px; margin-left: 3px; flex: none; background: #c0bdb6; border: 1px solid #a3a099; display: flex; align-items: center; justify-content: center;`;
const KeyCol = styled.div`width: 57px; margin-left: 3px; flex: none; display: flex; flex-direction: column; gap: 3px;`;
const KeyText = styled.div`height: 18px; background: #c6c3bc; border: 1px solid #a3a099; text-align: center; font-size: 11px; line-height: 16px; color: #222; white-space: nowrap;`;
const ComboCol = styled.div`width: 97px; margin-left: 4px; flex: none; display: flex; flex-direction: column; gap: 1px;`;
const StatusCombo = styled.div`height: 18px; padding: 0 5px 0 3px; display: flex; align-items: center; justify-content: space-between; background: #dfddd8; border-top: 1px solid #4d4c47; border-left: 1px solid #4d4c47; font-size: 11px; color: #222;`;
const FilterRow = styled.div`height: 19px; display: flex; align-items: center;`;
const FilterBtn = styled.div`margin-left: 3px; flex: 1; height: 19px; background: #c6c3bc; border: 1px solid #a3a099; text-align: center; font-size: 11px; line-height: 17px; white-space: nowrap; color: #222;`;
const PlayCol = styled.div`margin-left: 11px; flex: 1; display: flex; flex-direction: column; gap: 3px; padding-top: 1px;`;
const PlayRow = styled.div`height: 16px; display: flex; align-items: center;`;
const FrameInput = styled.div`margin-left: 5px; width: 54px; height: 18px; background: #dfddd8; border-top: 1px solid #1c1c1a; border-left: 1px solid #1c1c1a; padding-left: 3px; color: #234b78; font-size: 10px; line-height: 17px; font-family: "DejaVu Sans", sans-serif;`;

/* overlays */
const RedBox = styled.div<{ $x: number; $y: number; $w: number; $h: number }>`
  position: absolute; left: ${p => p.$x}px; top: ${p => p.$y}px; width: ${p => p.$w}px; height: ${p => p.$h}px;
  border: 2px solid #e8141c; pointer-events: none; z-index: 5;
`;
const ArrowLayer = styled.svg`position: absolute; left: 0; top: 0; pointer-events: none; z-index: 5;`;
const Watermark = styled.div`
  position: absolute; left: 1027px; top: 614px; z-index: 7; font-size: 15.500px; letter-spacing: .8px; white-space: nowrap;
  color: rgba(250,250,248,.82); text-shadow: 0 0 1px #444, 0 0 1px #444, 0 0 1px #555;
`;
const Badge = styled.div`
  position: absolute; left: 1131px; top: 587px; width: 53px; height: 53px; z-index: 6;
  background: linear-gradient(90deg, #333236 73%, #54555a 73%);
  display: flex; align-items: center; padding-left: 2px;
`;

/* ---------- viewport drawing ---------- */
const VX = 174 + 2, VY = 91 + 2;
const O: [number, number] = [558, 278];
const VPA: [number, number] = [-659, -525];
const VPB: [number, number] = [1528, -291];
const ALPHA = 0.066, BETA = 0.048;
const pt = (u: number, v: number) => {
  const d = 1 + u * ALPHA + v * BETA;
  return {
    x: (O[0] + u * ALPHA * VPB[0] + v * BETA * VPA[0]) / d,
    y: (O[1] + u * ALPHA * VPB[1] + v * BETA * VPA[1]) / d,
  };
};
const NEAR = 0.06;
const range = (a: number, b: number) => Array.from({ length: b - a + 1 }, (_, i) => a + i);
/* lines of constant u run towards VPA, lines of constant v towards VPB */
const gridU = range(-15, 26).map(u => {
  const a = pt(u, 16), b = pt(u, (NEAR - 1 - u * ALPHA) / BETA);
  return { x1: a.x, y1: a.y, x2: b.x, y2: b.y };
});
const gridV = range(-20, 16).map(v => {
  const a = pt(26, v), b = pt((NEAR - 1 - v * BETA) / ALPHA, v);
  return { x1: a.x, y1: a.y, x2: b.x, y2: b.y };
});

const Scene = () => (
  <svg width="846" height="463" viewBox={`${VX} ${VY} 846 463`} style={{ display: "block" }}>
    <g stroke="#b6b2a8" strokeOpacity=".42" strokeWidth=".9">
      {gridU.map((l, i) => <line key={i} {...l} />)}
      {gridV.map((l, i) => <line key={i} {...l} />)}
    </g>
    <path d="M277 92L985 556M175 484L345 393 558 278 873 93" stroke="#111" strokeWidth="1.200" fill="none" />
    {/* view cube */}
    <ellipse cx="975" cy="153" rx="27" ry="17" fill="none" stroke="#8d9694" strokeWidth="4" />
    <ellipse cx="975" cy="153" rx="24" ry="14.500" fill="none" stroke="#5d5e5a" strokeWidth="1" />
    <path d="M975 120l18 10-16 12-19-12z" fill="#bdbbb6" />
    <path d="M958 130l19 12v18l-15-10z" fill="#a3a19c" />
    <path d="M993 130l-16 12v18l15-12z" fill="#afada8" />
    <path d="M966 131h3M978 128h4M968 147l3 2M985 146l2-2" stroke="#6a6863" />
    {/* box */}
    <path d="M414 193L640 346 638 397 467 508 462 455 247 266 260 315z" fill="#2e5663" />
    <path d="M247 266L462 455 467 508 260 315z" fill="#2d5462" />
    <path d="M462 455L640 346 638 397 467 508z" fill="#6d9fb5" />
    <path d="M414 193L640 346 462 455 247 266z" fill="#91c9e6" />
    <path d="M247 266L414 193 640 346 638 397 467 508 260 315z" fill="none" stroke="#5fe8f2" strokeWidth="1.800" />
    <path d="M246 265L290 246M375 210L414 193 457 222M597 320L640 345V367M640 387V397L600 422M515 480L468 510 407 455M257 305V315L290 345M245 265L290 303M602 370L639 347M462 455L510 426" fill="none" stroke="#eef4f4" strokeWidth="1" />
    <path d="M462 455L467 508" stroke="#254a57" />
    {/* gizmo */}
    <path d="M425 242L433 298" stroke="#1c46d6" strokeWidth="2" />
    <rect x="424" y="240" width="3.500" height="3.500" fill="#0a20c8" />
    <path d="M433 298L382 387 484 390z" fill="#cfd24a" fillOpacity=".4" />
    <path d="M433 298L382 387 484 390zM433 298L440 355M382 387L440 355M484 390L440 355" fill="none" stroke="#dcd62a" strokeWidth=".9" />
    <path d="M430 275L355 401 503 406zM355 401L382 387M503 406L484 390" fill="none" stroke="#d8d22a" strokeWidth=".9" />
    <path d="M382 387L321 419" stroke="#d01c1c" />
    <rect x="319" y="417" width="4" height="4" fill="#d81818" />
    <path d="M484 390L527 423" stroke="#1e9a38" />
    <text x="427" y="234" fontSize="9" fill="#cfc43a" textAnchor="middle" fontFamily="Liberation Sans">z</text>
    <text x="316" y="421" fontSize="9" fill="#d5a52a" textAnchor="middle" fontFamily="Liberation Sans">x</text>
    <text x="534" y="427" fontSize="10" fill="#cfc43a" textAnchor="middle" fontFamily="Liberation Sans">y</text>
    {/* corner tripod */}
    <path d="M197 534V517" stroke="#1c34c8" />
    <path d="M197 534L185 542" stroke="#c81c24" />
    <path d="M197 534L210 542" stroke="#169a3c" />
    <text x="199" y="515" fontSize="9" fill="#1c34c8" textAnchor="middle" fontWeight="700" fontFamily="Liberation Sans">z</text>
    <text x="183" y="543" fontSize="9" fill="#c81c24" textAnchor="middle" fontWeight="700" fontFamily="Liberation Sans">x</text>
    <text x="214" y="542" fontSize="9" fill="#169a3c" textAnchor="middle" fontWeight="700" fontFamily="Liberation Sans">y</text>
  </svg>
);

const Ruler = () => {
  const ticks = Array.from({ length: 101 }, (_, i) => i);
  return (
    <svg width="807" height="23" viewBox="0 0 807 23" style={{ display: "block", flex: "none" }}>
      <path d="M0 1H807" stroke="#8a8780" />
      {ticks.map(i => <line key={i} x1={3 + i * 7.58} x2={3 + i * 7.58} y1={2} y2={11} stroke="#85827b" strokeWidth=".8" />)}
      <rect x="0" y="1" width="6" height="21" fill="#7ea6c4" stroke="#5d7f98" strokeWidth=".6" />
      {[0, 10, 20, 30, 40, 50, 60, 70, 80, 90, 100].map(n => (
        <text key={n} x={3 + n * 7.58} y="20" fontSize="10.500" textAnchor="middle" fill={n === 0 ? "#1d4a80" : "#2e2d2b"} fontFamily="Liberation Sans">{n}</text>
      ))}
    </svg>
  );
};

type Item = { t: "s"; ml: number } | { t: "c"; ml: number; w: number; text: string; grey?: boolean } | { t: "i"; ml: number; w?: number; hl?: boolean; el: React.ReactNode };
const tools: Item[] = [
  { t: "i", ml: 3, el: <ArrowL s={24} /> }, { t: "i", ml: 3, el: <ArrowR s={24} /> }, { t: "s", ml: 5 },
  { t: "i", ml: 2, el: <Link /> }, { t: "i", ml: 4, el: <Unlink /> }, { t: "i", ml: 4, el: <Bind /> },
  { t: "c", ml: 7, w: 60, text: "全部" },
  { t: "i", ml: 2, el: <SelObj /> }, { t: "i", ml: 4, el: <SelName /> }, { t: "i", ml: 4, w: 26, el: <RectSel /> }, { t: "i", ml: 2, w: 26, el: <WinSel /> }, { t: "s", ml: 2 },
  { t: "i", ml: 2, el: <Move /> }, { t: "i", ml: 4, el: <Rotate /> }, { t: "i", ml: 2, w: 28, hl: true, el: <Scale /> }, { t: "i", ml: 2, el: <Sphere /> },
  { t: "c", ml: 2, w: 60, text: "视图" },
  { t: "i", ml: 3, el: <Mirror2 /> }, { t: "s", ml: 4 }, { t: "i", ml: 2, el: <Pivot /> }, { t: "i", ml: 3, w: 26, hl: true, el: <Manip /> }, { t: "s", ml: 3 },
  { t: "i", ml: 3, el: <Snap3 /> }, { t: "i", ml: 3, el: <SnapA /> }, { t: "i", ml: 3, el: <SnapP /> }, { t: "s", ml: 1 },
  { t: "i", ml: 2, w: 26, hl: true, el: <SnapS /> }, { t: "s", ml: 2 }, { t: "i", ml: 2, el: <Pencil /> },
  { t: "c", ml: 4, w: 102, text: "创建选择集", grey: true }, { t: "s", ml: 3 },
  { t: "i", ml: 3, el: <MirrorBig /> }, { t: "i", ml: 4, el: <Align /> }, { t: "s", ml: 3 }, { t: "i", ml: 3, el: <ListI /> }, { t: "i", ml: 5, el: <LayerI /> }, { t: "s", ml: 3 },
  { t: "i", ml: 2, w: 26, hl: true, el: <Folder /> }, { t: "i", ml: 3, el: <Graph /> }, { t: "i", ml: 3, el: <Sched /> }, { t: "s", ml: 4 },
  { t: "i", ml: 6, el: <Globe /> }, { t: "s", ml: 2 }, { t: "i", ml: 3, el: <Teapot box={1} /> }, { t: "i", ml: 3, el: <Teapot box={2} /> }, { t: "i", ml: 3, el: <Teapot /> },
];

const menus = ["编辑(E)", "工具(T)", "组(G)", "视图(V)", "创建(C)", "修改器(M)", "动画(A)", "图形编辑器(D)", "渲染(R)", "Civil View", "自定义(U)", "脚本(S)", "帮助(H)"];

const Fields: [string, string][] = [["长度:", "34.896"], ["宽度:", "19.816"], ["高度:", "6.331"]];
const Segs: [string, string][] = [["长度分段:", "1"], ["宽度分段:", "1"], ["高度分段:", "1"]];

const P = ({ d, s = 16 }: { d: string; s?: number }) => <Svg s={s}><path d={d} fill="#2e2d2b" /></Svg>;

export default function App() {
  return (
    <Root>
      <Global />
      <LogoBtn>
        <LogoArt>
          <svg width="22" height="24" viewBox="0 0 22 24"><path d="M3 3l11 -2 6 8-4 4 4 5-8 5-9-3 7-3-5-3 4-3z" fill="#2fb5b8" /><path d="M14 1l6 8-4 4-4-4z" fill="#137f86" /><path d="M16 13l4 5-8 5z" fill="#0f6a72" /></svg>
          <Caret $c="#111" />
        </LogoArt>
        <LogoLabel>MAX</LogoLabel>
      </LogoBtn>

      <TitleBar>
        <QuickBar>
          <QuickBtn><NewIco /></QuickBtn>
          <QuickBtn><OpenIco /></QuickBtn>
          <QuickBtn><SaveIco /></QuickBtn>
          <QuickBtn><ArrowL /></QuickBtn>
          <QuickBtn $w={10}><Caret /></QuickBtn>
          <QuickBtn><ArrowR /></QuickBtn>
          <QuickBtn $w={10}><Caret /></QuickBtn>
          <QuickBtn><ProjIco /></QuickBtn>
          <WorkCombo>工作区: 默认<Caret /></WorkCombo>
          <MenuKnob><Caret /></MenuKnob>
        </QuickBar>
        <TitleText><span>Autodesk 3ds Max 2016</span><span>无标题</span></TitleText>
        <SearchBar>
          <Tri />
          <SearchInput>键入关键字或短语</SearchInput>
          <SearchIcons>
            <SearchIcon><Binoc /></SearchIcon>
            <SearchIcon><Dish /></SearchIcon>
            <SearchIcon><Star /></SearchIcon>
            <SearchIcon><User /></SearchIcon>
            <SearchIcon $ml={2}>登录</SearchIcon>
            <SearchIcon $ml={52}><Caret /></SearchIcon>
            <SearchIcon $ml={4}><XLogo /></SearchIcon>
            <SearchIcon $ml={12}><Help /></SearchIcon>
            <SearchIcon $ml={2}><Caret /></SearchIcon>
          </SearchIcons>
        </SearchBar>
        <WinCtrls>
          <WinBtn><svg width="10" height="10"><path d="M0 5.500h10" stroke="#222" /></svg></WinBtn>
          <WinBtn><svg width="10" height="10"><path d="M.5 2.500h7v7h-7zM2.500 2.500v-2h7v7h-2" fill="none" stroke="#222" /></svg></WinBtn>
          <WinBtn><svg width="10" height="10"><path d="M.5.5l9 9M9.500.5l-9 9" stroke="#222" /></svg></WinBtn>
        </WinCtrls>
      </TitleBar>

      <MenuBar>{menus.map(m => <span key={m}>{m}</span>)}</MenuBar>

      <ToolBar>
        <Grip />
        {tools.map((it, i) =>
          it.t === "s" ? <ToolSep key={i} $ml={it.ml} /> :
          it.t === "c" ? <ToolCombo key={i} $ml={it.ml} $w={it.w} $grey={it.grey}>{it.text}<Chev /></ToolCombo> :
          <Slot key={i} $ml={it.ml} $w={it.w ?? 24} $hl={it.hl}>{it.el}</Slot>
        )}
      </ToolBar>

      <Ribbon>
        <Grip />
        <RibbonTab $ml={27}>建模</RibbonTab>
        <RibbonTab $ml={32}>自由形式</RibbonTab>
        <RibbonTab $ml={45}>选择</RibbonTab>
        <RibbonTab $ml={24} $active>对象绘制</RibbonTab>
        <RibbonTab $ml={23}>填充</RibbonTab>
        <RibbonTab $ml={26}><svg width="12" height="8"><rect width="12" height="8" rx="1.500" fill="#e6e4de" /><path d="M3 2.500h6L6 6z" fill="#333" /></svg></RibbonTab>
        <RibbonTab $ml={4}><Caret $c="#c8c6c0" /></RibbonTab>
      </Ribbon>

      <Main>
        <LeftPanel>
          <PanelTabs><span>选择</span><span>显示</span><span>编辑</span></PanelTabs>
          <FindRow><FindBox /><Chevrons $ml={22}>»</Chevrons></FindRow>
          <PanelBody>
            <ToolCol>
              {leftIcons.map((ic, i) => <ToolTile key={i} $y>{ic}</ToolTile>)}
              <ToolDiv />
              <ToolTile><Doc /></ToolTile>
              <ToolTile><Doc lines={1} /></ToolTile>
              <ToolTile><Doc lines={2} /></ToolTile>
              <ToolDiv />
              <ToolTile><Funnel /></ToolTile>
              <ToolTile><FunnelDoc /></ToolTile>
              <ToolTile><Strip /></ToolTile>
            </ToolCol>
            <ObjectList>
              <ListHead>名称(按升序排序)<SortTri /></ListHead>
              <ListRow>
                <Svg s={15}><path d="M10 1a6 6 0 0 0-4 10.500c.8 1 1 2 1 3h6c0-1 .2-2 1-3A6 6 0 0 0 10 1z" fill="#f3e04c" stroke="#4d4a25" /><path d="M7.500 16h5v2.500h-5z" fill="#555" /></Svg>
                <Svg s={15}><circle cx="10" cy="10" r="9" fill="#ecebe7" stroke="#55534e" /></Svg>
                <ListName>Box001</ListName>
              </ListRow>
            </ObjectList>
          </PanelBody>
          <PanelFoot>
            <FootCombo>工作区: 默认</FootCombo>
            <FootCaret><Caret $c="#111" /></FootCaret>
            <FootSep />
            <Chevrons $ml={15}>»</Chevrons>
          </PanelFoot>
        </LeftPanel>

        <Center>
          <Viewport>
            <Scene />
            <ViewLabel>[+] [透视] [真实]</ViewLabel>
          </Viewport>
          <Timeline>
            <ScrollRow>
              <ScrollBtn>&lt;</ScrollBtn>
              <ScrollThumb>0 / 100</ScrollThumb>
            </ScrollRow>
            <RulerRow>
              <KeyMode>
                <svg width="18" height="16" viewBox="0 0 18 16"><rect x="1" y="1" width="16" height="6" fill="#e4e3df" stroke="#333" /><path d="M4 4h10" stroke="#333" /><path d="M5 9v5m-2-2l2 2 2-2M13 14V9m-2 2l2-2 2 2" stroke="#333" fill="none" /><path d="M0 15h18" stroke="#333" /></svg>
              </KeyMode>
              <Ruler />
            </RulerRow>
          </Timeline>
        </Center>

        <RightPanel>
          <TabRow>
            <CmdTab><Svg s={17}><path d="M10 1l2 5 5-2-2 5 4 1-4 2 2 5-5-2-2 4-2-4-5 2 2-5-4-2 4-1-2-5 5 2z" fill="#f09a3a" /><circle cx="10" cy="10" r="3.500" fill="#e8502a" /></Svg></CmdTab>
            <CmdTab $active><Svg s={19}><path d="M4 18C4 9 9 3 17 3v5c-5 0-8 4-8 10z" fill="#2f9ac8" stroke="#17506c" /><circle cx="3" cy="18" r="1.500" fill="#ddd" stroke="#333" /><circle cx="18" cy="3" r="1.500" fill="#ddd" stroke="#333" /></Svg></CmdTab>
            <CmdTab><Svg s={18}><rect x="7" y="1" width="6" height="6" fill="#e4e3df" stroke={K} /><path d="M10 7v4M3 14v-3h14v3M10 11v3" stroke={K} /><rect x="1" y="14" width="5" height="5" fill="#eee" stroke={K} /><rect x="7.500" y="14" width="5" height="5" fill="#eee" stroke={K} /><rect x="14" y="14" width="5" height="5" fill="#eee" stroke={K} /></Svg></CmdTab>
            <CmdTab><Svg s={18}><circle cx="11" cy="10" r="7.500" fill="#e4e3df" stroke={K} strokeWidth="1.500" /><circle cx="11" cy="10" r="4" stroke={K} /><circle cx="11" cy="10" r="1.300" fill={K} /><path d="M1 6v8M2.500 4v12" stroke="#777" /></Svg></CmdTab>
            <CmdTab><Svg s={18}><rect x="2" y="2" width="16" height="12" fill="#eee" stroke={K} strokeWidth="1.500" /><rect x="6" y="5" width="6" height="6" fill="#ddd" stroke="#555" /><path d="M5 17h10" stroke={K} strokeWidth="1.500" /></Svg></CmdTab>
            <CmdTab><Svg s={19}><path d="M3 18L12 8l2 2-9 10z" fill="#a9582e" stroke="#5a2e18" /><path d="M9 5c3-3 6-3 9 1l-2 3-2-1-3 3-3-3z" fill="#555" stroke="#222" /></Svg></CmdTab>
          </TabRow>
          <NameRow><NameInput>Box001</NameInput><Swatch /></NameRow>
          <ModCombo>修改器列表<Chev /></ModCombo>
          <Stack><StackItem>Box</StackItem></Stack>
          <StackTools>
            <StackBtn $ml={0}><Svg s={15}><path d="M1 10h6M7 6v8l5-2h6V8h-6z" fill="#333" stroke="#222" /></Svg></StackBtn>
            <StackBtn $ml={5} $on><Svg s={17}><path d="M7 3h6l-1 2v13H8V5z" fill="#f1f0ec" stroke="#1f1f1d" strokeWidth="1.200" /></Svg></StackBtn>
            <StackSep $ml={5} />
            <StackBtn $ml={3}><Svg s={15}><path d="M2 4l8 10 8-10M10 14v4M6 9l4 2 4-2" stroke="#9b9891" fill="none" /></Svg></StackBtn>
            <StackBtn $ml={0}><Svg s={15}><rect x="6" y="6" width="8" height="11" rx="4" stroke="#9b9891" fill="#d7d5cf" /><path d="M7 6c0-4 6-4 6 0" stroke="#9b9891" /></Svg></StackBtn>
            <StackSep $ml={3} />
            <StackBtn $ml={5}><Svg s={16}><rect x="2" y="2" width="14" height="15" fill="#e4e3df" stroke="#21329a" strokeWidth="1.500" /><rect x="8" y="9" width="4" height="3" fill="#222" /><rect x="13" y="9" width="4" height="3" fill="#222" /><rect x="8" y="14" width="4" height="3" fill="#222" /><rect x="13" y="14" width="4" height="3" fill="#222" /></Svg></StackBtn>
          </StackTools>
          <HeavyLine />
          <Rollout>
            <RollHead>-<RollTitle>参数</RollTitle></RollHead>
            <RollBody>
              <FieldGroup $mb={5}>
                {Fields.map(([l, v]) => (
                  <FieldRow key={l}><FieldLabel>{l}</FieldLabel><FieldInput>{v}</FieldInput><Spinner><SpinUp /><SpinDown /></Spinner></FieldRow>
                ))}
              </FieldGroup>
              <FieldGroup $mb={2}>
                {Segs.map(([l, v]) => (
                  <FieldRow key={l}><FieldLabel>{l}</FieldLabel><FieldInput>{v}</FieldInput><Spinner><SpinUp /><SpinDown /></Spinner></FieldRow>
                ))}
              </FieldGroup>
              <CheckRow>
                <CheckBox><svg width="9" height="9"><path d="M1 4l3 3 4-6" stroke="#111" strokeWidth="1.600" fill="none" /></svg></CheckBox>
                生成贴图坐标
              </CheckRow>
              <CheckRow><CheckBox />真实世界贴图大小</CheckRow>
            </RollBody>
          </Rollout>
          <GrooveLine />
        </RightPanel>
      </Main>

      <Status>
        <LeftCol>
          <Pink />
          <Welcome>欢迎使用 <MonoSpan>MAXSc</MonoSpan></Welcome>
        </LeftCol>
        <MidCol>
          <MidRow>
            <StatusBox $w={319}>选择了 1 个 对象</StatusBox>
            <MiniIcon $ml={4}><Svg s={16}><path d="M10 1a7 7 0 0 0-5 11l3 2v4h4v-4l3-2a7 7 0 0 0-5-11z" fill="#d85a5e" stroke="#5e2a2c" /></Svg></MiniIcon>
            <MiniIcon $ml={7}><Svg s={16}><rect x="4" y="9" width="12" height="9" fill="#e0c98e" stroke="#5e4e25" /><path d="M6 9V6a4 4 0 0 1 8 0v3" stroke="#555" strokeWidth="1.500" /></Svg></MiniIcon>
            <MiniIcon $ml={7}><Svg s={16}><rect x="2" y="2" width="16" height="16" fill="#e8e6e1" stroke="#55534e" /><circle cx="10" cy="10" r="4" stroke="#333" /><path d="M10 2v5M10 13v5M2 10h5M13 10h5" stroke="#333" /></Svg></MiniIcon>
            <AxisLabel $w={16}>X:</AxisLabel>
            <CoordInput>100.0</CoordInput>
            <Spinner><SpinUp /><SpinDown /></Spinner>
            <AxisLabel $w={10}>Y:</AxisLabel>
            <CoordInput $off>100.0</CoordInput>
            <AxisLabel $w={21}>Z:</AxisLabel>
            <CoordInput $off>100.0</CoordInput>
            <StatusBox $w={86} $ml={13}>栅格 = 10.0</StatusBox>
          </MidRow>
          <MidRow>
            <StatusBox $w={582}>单击并拖动以选择并缩放对象(均匀地)</StatusBox>
            <YellowTile><Svg s={15}><path d="M3 6l3-3h11v11l-3 3H3z" fill="#f0efea" stroke="#333" /><path d="M3 6h11v11M14 6l3-3" stroke="#333" /></Svg></YellowTile>
            <StatusBox $w={86} $ml={3}>添加时间标记</StatusBox>
          </MidRow>
        </MidCol>
        <KeyBtn><svg width="22" height="12" viewBox="0 0 22 12"><circle cx="5" cy="5" r="3.500" fill="none" stroke="#111" strokeWidth="2" /><path d="M9 5h13M15 5v4M19 5v4" stroke="#111" strokeWidth="2" /></svg></KeyBtn>
        <KeyCol><KeyText>自动关键点</KeyText><KeyText>设置关键点</KeyText></KeyCol>
        <ComboCol>
          <StatusCombo>选定对象<Chev /></StatusCombo>
          <FilterRow>
            <Svg s={18}><path d="M2 16c3 0 3-12 6-12s2 12 5 12c2 0 1-6 4-6" stroke="#d0181e" strokeWidth="1.300" /><path d="M3 3h3M13 3h3M3 18h14" stroke="#4b56a8" /></Svg>
            <FilterBtn>关键点过滤器...</FilterBtn>
          </FilterRow>
        </ComboCol>
        <PlayCol>
          <PlayRow>
            <P d="M2 4h2v12H2zM11 4v12L4 10zM19 4v12l-8-6z" />
            <ToolSep $ml={3} />
            <P d="M10 4v12l-8-6zM11 4h2v12h-2zM15 4h2v12h-2z" />
            <MiniIcon $ml={3}><P d="M4 3l12 7-12 7z" /></MiniIcon>
            <MiniIcon $ml={4}><P d="M3 4h2v12H3zM7 4h2v12H7zM11 4l8 6-8 6z" /></MiniIcon>
            <ToolSep $ml={3} />
            <P d="M1 4l8 6-8 6zM9 4l8 6-8 6zM17 4h2v12h-2z" />
            <MiniIcon $ml={5}><Svg s={17}><circle cx="8" cy="8" r="5.500" fill="#dfe8f2" stroke="#333" strokeWidth="1.400" /><path d="M12 12l6 6" stroke="#333" strokeWidth="2" /><path d="M16 2v4M14 4h4" stroke="#333" /></Svg></MiniIcon>
            <MiniIcon $ml={3}><Svg s={15}><rect x="2" y="2" width="7" height="7" fill="#e4e3df" stroke="#444" /><rect x="11" y="2" width="7" height="7" fill="#e4e3df" stroke="#444" /><rect x="2" y="11" width="7" height="7" fill="#e4e3df" stroke="#444" /><rect x="11" y="11" width="7" height="7" fill="#e4e3df" stroke="#444" /></Svg></MiniIcon>
          </PlayRow>
          <PlayRow>
            <P d="M2 4h1v12H2zM10 5v10l-6-5zM10 5v10l6-5zM17 4h1v12h-1z" />
            <FrameInput>0</FrameInput>
            <MiniIcon $ml={2}><Spinner><SpinUp /><SpinDown /></Spinner></MiniIcon>
            <MiniIcon $ml={3}><Svg s={15}><rect x="2" y="2" width="9" height="16" fill="#e4e3df" stroke="#21329a" /><rect x="11" y="11" width="3" height="3" fill="#222" /><rect x="15" y="11" width="3" height="3" fill="#222" /><rect x="11" y="15" width="3" height="3" fill="#222" /></Svg></MiniIcon>
          </PlayRow>
        </PlayCol>
      </Status>

      <RedBox $x={675} $y={40} $w={45} $h={35} />
      <RedBox $x={1062} $y={324} $w={106} $h={75} />
      <ArrowLayer width="1184" height="640" viewBox="0 0 1184 640">
        <path d="M704 74L705.500 73.500 1048 314 1052 308 1062 328 1040 323 1044 318z" fill="#e8141c" />
      </ArrowLayer>
      <Badge>
        <svg width="36" height="36" viewBox="0 0 36 36">
          {Array.from({ length: 9 }, (_, i) => i * 30 - 120).map(a => <rect key={a} x="15.500" y="2" width="5" height="6" rx="1.500" fill="#ef7d50" transform={`rotate(${a} 18 20)`} />)}
          <circle cx="18" cy="20" r="12" fill="#ef7d50" />
          <circle cx="18" cy="20" r="8" fill="#3a3336" />
          <path d="M15 15l8 5-8 5z" fill="#ef7d50" />
        </svg>
      </Badge>
      <Watermark>CSDN @@.999999</Watermark>
    </Root>
  );
}
